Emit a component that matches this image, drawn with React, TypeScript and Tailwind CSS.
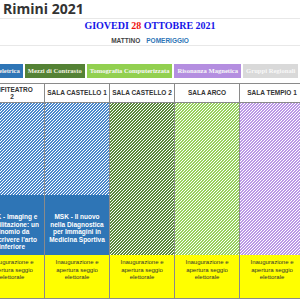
import React from "react";

const sans = "font-['Liberation_Sans',Arial,sans-serif]";
const serif = "font-['Liberation_Serif','Times_New_Roman',serif]";

function Chip({ label, cls }: { label: string; cls: string }) {
  return (
    <div className={`h-[14px] px-[3px] flex items-center whitespace-nowrap text-[6.6px] font-bold ${serif} ${cls}`}>
      {label}
    </div>
  );
}

const headers = ["ANFITEATRO 2", "SALA CASTELLO 1", "SALA CASTELLO 2", "SALA ARCO", "SALA TEMPIO 1"];

export default function App() {
  const stripeBlue =
    "bg-[linear-gradient(135deg,#4a88cc_25%,#ffffff_25%,#ffffff_50%,#4a88cc_50%,#4a88cc_75%,#ffffff_75%)] bg-[length:3px_3px]";
  const stripeDark =
    "bg-[linear-gradient(135deg,#5a8a3a_25%,#ffffff_25%,#ffffff_50%,#5a8a3a_50%,#5a8a3a_75%,#ffffff_75%)] bg-[length:3px_3px]";
  const stripeLight =
    "bg-[linear-gradient(135deg,#98d25e_25%,#ffffff_25%,#ffffff_50%,#98d25e_50%,#98d25e_75%,#ffffff_75%)] bg-[length:3px_3px]";
  const stripePurple =
    "bg-[linear-gradient(135deg,#bb98e6_25%,#ffffff_25%,#ffffff_50%,#bb98e6_50%,#bb98e6_75%,#ffffff_75%)] bg-[length:3px_3px]";

  const yellowText = (
    <div className={`h-[43px] bg-[#ffff00] pt-[4px] text-center text-[6px] leading-[7.5px] text-[#333] ${sans}`}>
      Inaugurazione e<br />apertura seggio<br />elettorale
    </div>
  );

  return (
    <div className="w-[300px] h-[300px] overflow-hidden bg-white">
      {/* title */}
      <div className="h-[19px] border-b border-[#e8e8e8] pl-[3px] flex items-start">
        <div className="font-['Open_Sans',sans-serif] font-bold text-[14px] leading-[18px] text-[#333] whitespace-nowrap">
          Rimini 2021
        </div>
      </div>
      {/* date */}
      <div className="h-[27px] border-b border-[#e8e8e8] flex flex-col items-center">
        <div className={`${serif} font-bold text-[10px] leading-[12px] pt-[1px] text-[#1515e8] whitespace-nowrap`}>
          GIOVEDI <span className="text-[#ee1111]">28</span> OTTOBRE 2021
        </div>
        <div className={`${sans} mt-[5px] font-bold text-[6.5px] leading-[7px] flex gap-[6px]`}>
          <span className="text-[#444]">MATTINO</span>
          <span className="text-[#2e75b6]">POMERIGGIO</span>
        </div>
      </div>
      {/* legend */}
      <div className="h-[37px] pt-[18px] overflow-hidden">
        <div className="flex gap-[2px] ml-[-37px]">
          <Chip label="Muscoloscheletrica" cls="bg-[#2e75b6] text-[#f0f0f0]" />
          <Chip label="Mezzi di Contrasto" cls="bg-[#548235] text-[#f2f2e0]" />
          <Chip label="Tomografia Computerizzata" cls="bg-[#92d050] text-[#f8f8f8]" />
          <Chip label="Risonanza Magnetica" cls="bg-[#b48ee0] text-[#f8f8f8]" />
          <Chip label="Gruppi Regionali" cls="bg-[#d9d9d9] text-[#f8f8f8]" />
          <Chip label="Varie" cls="bg-[#c00000] text-[#f8f8f8]" />
        </div>
      </div>
      {/* table */}
      <div className="ml-[-21px] w-[325px]">
        <div className="flex h-[20px] border-y border-[#8a8a8a]">
          {headers.map((h, i) => (
            <div
              key={h}
              className={`w-[65px] shrink-0 border-l border-[#8a8a8a] flex items-center justify-center text-center px-[1px] text-[6.5px] leading-[7.5px] font-bold text-[#333] whitespace-nowrap ${sans}`}
            >
              {i === 0 ? (
                <span>
                  ANFITEATRO
                  <br />2
                </span>
              ) : (
                h
              )}
            </div>
          ))}
        </div>
        <div className="flex h-[196px] border-b border-[#8a8a8a]">
          {/* col A */}
          <div className="w-[65px] shrink-0 border-l border-[#8a8a8a] flex flex-col">
            <div className={`h-[92px] ${stripeBlue}`} />
            <div className={`h-[60px] bg-[#2e75b6] pt-[18px] text-center text-white font-bold text-[6.5px] leading-[7.5px] whitespace-nowrap ${sans}`}>
              MSK - Imaging e<br />Riabilitazione: un<br />binomio da<br />descrivere l'arto<br />inferiore
            </div>
            {yellowText}
          </div>
          {/* col B */}
          <div className="w-[65px] shrink-0 border-l border-[#8a8a8a] flex flex-col">
            <div className={`h-[92px] ${stripeBlue}`} />
            <div className={`h-[60px] bg-[#2e75b6] pt-[18px] text-center text-white font-bold text-[6.5px] leading-[7.5px] whitespace-nowrap ${sans}`}>
              MSK - Il nuovo<br />nella Diagnostica<br />per Immagini in<br />Medicina Sportiva
            </div>
            {yellowText}
          </div>
          {/* col C */}
          <div className="w-[65px] shrink-0 border-l border-[#8a8a8a] flex flex-col">
            <div className={`h-[152px] ${stripeDark}`} />
            {yellowText}
          </div>
          {/* col D */}
          <div className="w-[65px] shrink-0 border-l border-[#8a8a8a] flex flex-col">
            <div className={`h-[152px] ${stripeLight}`} />
            {yellowText}
          </div>
          {/* col E */}
          <div className="w-[65px] shrink-0 border-l border-[#8a8a8a] flex flex-col">
            <div className={`h-[152px] ${stripePurple}`} />
            {yellowText}
          </div>
        </div>
      </div>
    </div>
  );
}
